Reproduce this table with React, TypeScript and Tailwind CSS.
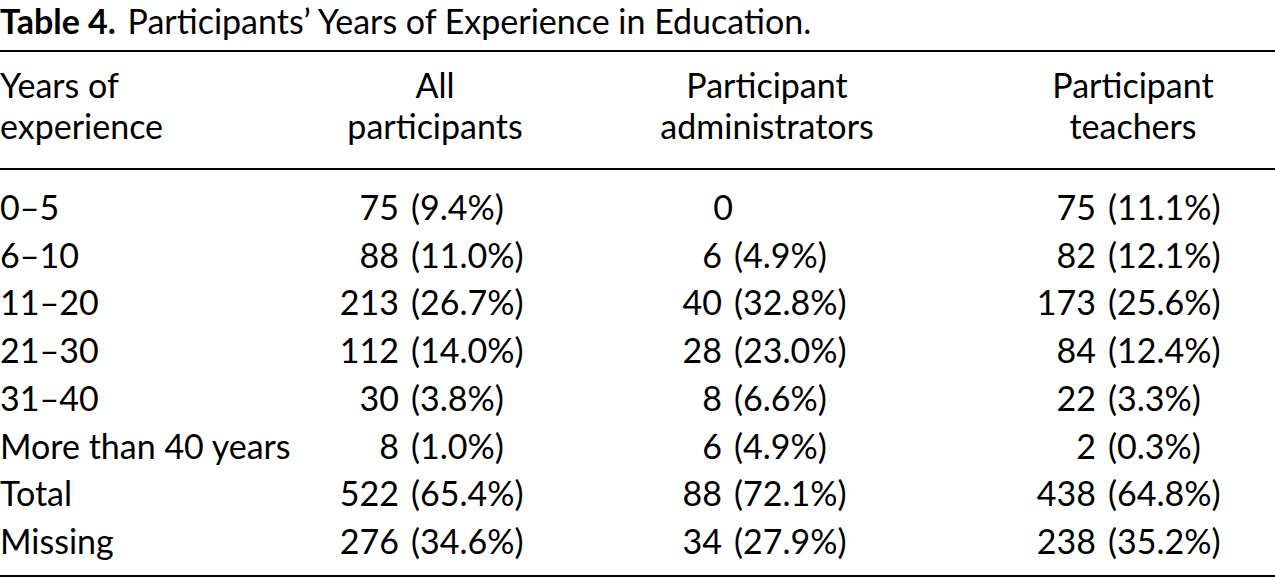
const rows = [
  { label: "0–5", a: ["75", "(9.4%)"], b: ["0", ""], c: ["75", "(11.1%)"] },
  { label: "6–10", a: ["88", "(11.0%)"], b: ["6", "(4.9%)"], c: ["82", "(12.1%)"] },
  { label: "11–20", a: ["213", "(26.7%)"], b: ["40", "(32.8%)"], c: ["173", "(25.6%)"] },
  { label: "21–30", a: ["112", "(14.0%)"], b: ["28", "(23.0%)"], c: ["84", "(12.4%)"] },
  { label: "31–40", a: ["30", "(3.8%)"], b: ["8", "(6.6%)"], c: ["22", "(3.3%)"] },
  { label: "More than 40 years", a: ["8", "(1.0%)"], b: ["6", "(4.9%)"], c: ["2", "(0.3%)"] },
  { label: "Total", a: ["522", "(65.4%)"], b: ["88", "(72.1%)"], c: ["438", "(64.8%)"] },
  { label: "Missing", a: ["276", "(34.6%)"], b: ["34", "(27.9%)"], c: ["238", "(35.2%)"] },
];

export default function App() {
  return (
    <div className="w-[1275px] h-[584px] overflow-hidden bg-white text-black font-['Lato',sans-serif] text-[34px]">
      <div className="h-[50px] leading-[41px] whitespace-pre">
        <span className="font-bold">Table 4.</span>
        <span className="ml-[3px]"> Participants’ Years of Experience in Education.</span>
      </div>
      <div className="h-[2px] bg-black" />

      <div className="flex leading-[41px] pt-[12px] pb-[22px]">
        <div className="w-[300px] shrink-0">
          Years of
          <br />
          experience
        </div>
        <div className="w-[270px] shrink-0 text-center">
          All
          <br />
          participants
        </div>
        <div className="w-[394px] shrink-0 text-center">
          Participant
          <br />
          administrators
        </div>
        <div className="w-[338px] shrink-0 text-center">
          Participant
          <br />
          teachers
        </div>
      </div>
      <div className="h-[2px] bg-black" />

      <div className="pt-[13px] pb-[10px]">
        {rows.map((r) => (
          <div key={r.label} className="grid grid-cols-[300px_99px_201px_122px_228px_146px_179px] leading-[47.7px]">
            <div className="whitespace-nowrap">{r.label}</div>
            <div className="text-right">{r.a[0]}</div>
            <div className="pl-[12px] whitespace-nowrap">{r.a[1]}</div>
            <div className={r.b[1] ? "text-right" : "text-right -mr-[11px]"}>{r.b[0]}</div>
            <div className="pl-[12px] whitespace-nowrap">{r.b[1]}</div>
            <div className="text-right">{r.c[0]}</div>
            <div className="pl-[12px] whitespace-nowrap">{r.c[1]}</div>
          </div>
        ))}
      </div>
      <div className="h-[2px] bg-black" />
    </div>
  );
}
